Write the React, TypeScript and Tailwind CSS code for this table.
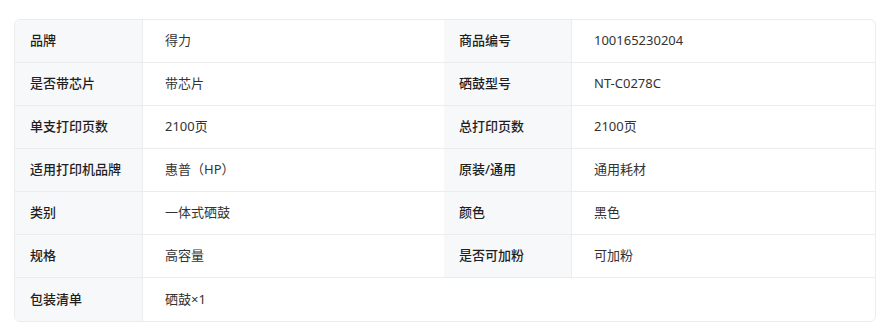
import React from "react";

type Pair = [string, string];

const rows: [Pair, Pair | null][] = [
  [["品牌", "得力"], ["商品编号", "100165230204"]],
  [["是否带芯片", "带芯片"], ["硒鼓型号", "NT-C0278C"]],
  [["单支打印页数", "2100页"], ["总打印页数", "2100页"]],
  [["适用打印机品牌", "惠普（HP）"], ["原装/通用", "通用耗材"]],
  [["类别", "一体式硒鼓"], ["颜色", "黑色"]],
  [["规格", "高容量"], ["是否可加粉", "可加粉"]],
  [["包装清单", "硒鼓×1"], null],
];

const Label = ({ text }: { text: string }) => (
  <div className="w-[128px] shrink-0 bg-[#f7f8fa] border-r border-[#ececec] flex items-center pl-[15px] font-medium text-[#1f1f1f]">
    {text}
  </div>
);

const Value = ({ text, fixed }: { text: string; fixed?: boolean }) => (
  <div className={`${fixed ? "w-[301px] shrink-0" : "flex-1"} flex items-center pl-[22px] text-[#333]`}>
    {text}
  </div>
);

export default function App() {
  return (
    <div
      className="w-[888px] h-[336px] bg-white pt-[19px] pl-[14px] pr-[12px]"
      style={{ fontFamily: '"Noto Sans", "Noto Sans CJK SC", sans-serif' }}
    >
      <div className="border border-[#ececec] rounded-[6px] overflow-hidden text-[13px]">
        {rows.map(([left, right], i) => (
          <div
            key={i}
            className={`flex h-[43px] ${i < rows.length - 1 ? "border-b border-[#ececec]" : ""}`}
          >
            <Label text={left[0]} />
            <Value text={left[1]} fixed />
            {right ? (
              <>
                <Label text={right[0]} />
                <Value text={right[1]} />
              </>
            ) : (
              <div className="flex-1" />
            )}
          </div>
        ))}
      </div>
    </div>
  );
}
